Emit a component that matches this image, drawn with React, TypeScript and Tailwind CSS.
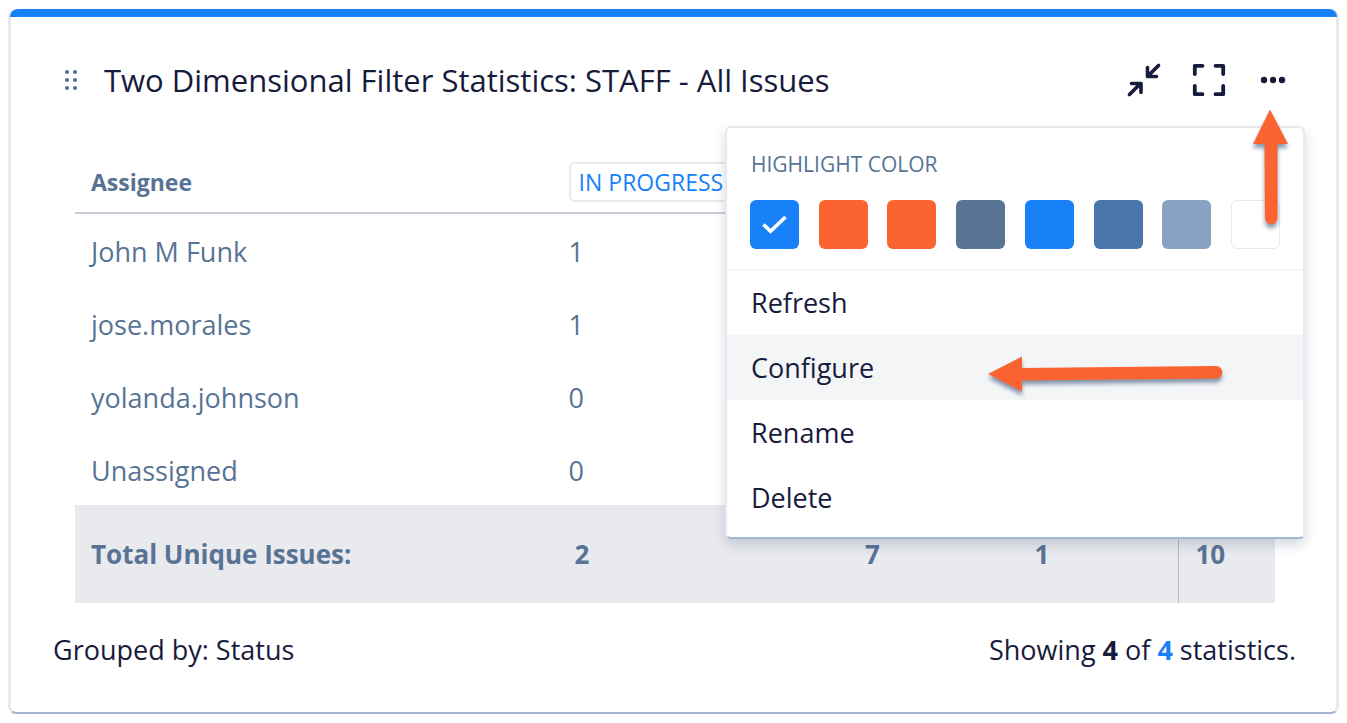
import React from "react";

type Row = { name: string; inProgress: number };

const rows: Row[] = [
  { name: "John M Funk", inProgress: 1 },
  { name: "jose.morales", inProgress: 1 },
  { name: "yolanda.johnson", inProgress: 0 },
  { name: "Unassigned", inProgress: 0 },
];

const swatches = [
  { label: "Blue", color: "bg-[#1881f8]", selected: true },
  { label: "Red", color: "bg-[#fb6430]" },
  { label: "Orange", color: "bg-[#fb6430]" },
  { label: "Slate", color: "bg-[#587394]" },
  { label: "Bright blue", color: "bg-[#1881f8]" },
  { label: "Steel blue", color: "bg-[#4977ad]" },
  { label: "Light steel", color: "bg-[#88a3c1]" },
  { label: "White", color: "border border-[#e8e9ee] bg-white" },
];

const actions = ["Refresh", "Configure", "Rename", "Delete"];

function DragHandle() {
  return (
    <svg width="14" height="22" viewBox="0 0 14 22" fill="#587394" aria-hidden="true">
      {[3, 11, 19].map((y) => (
        <React.Fragment key={y}>
          <circle cx="3" cy={y} r="2.1" />
          <circle cx="11" cy={y} r="2.1" />
        </React.Fragment>
      ))}
    </svg>
  );
}

function MinimizeIcon() {
  return (
    <svg width="34" height="34" viewBox="0 0 34 34" fill="none" stroke="#171b3c" strokeWidth="3.6" strokeLinecap="round" strokeLinejoin="round" aria-hidden="true">
      <path d="M31.500 2.500 21 13M20.500 4.500V13.500h9" />
      <path d="M2.500 31.500 13 21M4.500 20.500h9.500v9" />
    </svg>
  );
}

function MaximizeIcon() {
  return (
    <svg width="34" height="34" viewBox="0 0 34 34" fill="none" stroke="#171b3c" strokeWidth="3.8" strokeLinecap="round" strokeLinejoin="round" aria-hidden="true">
      <path d="M10.500 2.800H2.800V11M23.500 2.800h7.700V11M10.500 31.200H2.800V23M23.500 31.200h7.700V23" />
    </svg>
  );
}

function MoreIcon() {
  return (
    <svg width="26" height="8" viewBox="0 0 26 8" fill="#171b3c" aria-hidden="true">
      <circle cx="4" cy="4" r="3.2" />
      <circle cx="13" cy="4" r="3.2" />
      <circle cx="22" cy="4" r="3.2" />
    </svg>
  );
}

function GadgetMenu() {
  return (
    <div className="absolute right-[31px] top-[117px] w-[580px] rounded-md border-2 border-[#e8e9ee] border-b-[#a3b8d0] bg-white pb-[7px] shadow-[0_6px_12px_rgba(60,80,120,0.22)]">
      <div className="border-b border-[#f0f1f4] px-[23px] py-5">
        <h2 className="pl-px text-[21px] leading-8 text-[#587394]">HIGHLIGHT COLOR</h2>
        <div className="mt-5 flex justify-between">
          {swatches.map((s) => (
            <button
              key={s.label}
              type="button"
              aria-label={s.label}
              className={`flex size-[49px] items-center justify-center rounded-md ${s.color}`}
            >
              {s.selected && (
                <svg width="25" height="19" viewBox="0 0 25 19" fill="none" stroke="#fff" strokeWidth="3.6" aria-hidden="true">
                  <path d="m1.500 9.500 7 6.800L23.500 2" />
                </svg>
              )}
            </button>
          ))}
        </div>
      </div>
      {actions.map((a) => (
        <button
          key={a}
          type="button"
          className={`flex h-[65px] w-full items-center px-6 pt-px text-left text-[27px] leading-9 text-[#171b3c] ${a === "Configure" ? "bg-[#f4f5f7]" : ""}`}
        >
          {a}
        </button>
      ))}
      <svg className="pointer-events-none absolute right-[71px] top-[223px] overflow-visible drop-shadow-[0_4px_2px_rgba(60,85,120,0.6)]" width="244" height="44" viewBox="0 0 244 44" fill="#fb6430" aria-hidden="true">
        <path d="M0 23 34 5.500V17L228 15a6.200 6.200 0 0 1 0 12.500L34 29.500V40.500Z" />
      </svg>
      <svg className="pointer-events-none absolute -top-5 right-[14px] overflow-visible drop-shadow-[0_4px_2px_rgba(60,85,120,0.6)]" width="36" height="118" viewBox="0 0 36 118" fill="#fb6430" aria-hidden="true">
        <path d="M17 1.500 35 36H24.500V110a6.200 6.200 0 0 1-12.500 0L11.500 36H0Z" />
      </svg>
    </div>
  );
}

export default function App() {
  return (
    <main className="min-h-screen bg-white px-2 pb-2 pt-[9px] font-['Open_Sans',sans-serif] text-[#171b3c]">
      <section className="relative rounded-lg border-x-[3px] border-b-2 border-x-[#e8e9ee] border-b-[#a3b8d0]">
        <div className="-mx-px h-2 rounded-t-lg bg-[#1881f8]" />
        <header className="flex items-center justify-between pl-[53px] pr-[50px] pt-9">
          <div className="flex items-center gap-[26px]">
            <DragHandle />
            <h1 className="whitespace-nowrap text-[31px] font-medium leading-[54px]">
              Two Dimensional Filter Statistics: STAFF - All Issues
            </h1>
          </div>
          <div className="flex items-center gap-[34px]">
            <div className="flex items-center gap-[31px]">
              <button type="button" aria-label="Minimize">
                <MinimizeIcon />
              </button>
              <button type="button" aria-label="Maximize">
                <MaximizeIcon />
              </button>
            </div>
            <button type="button" aria-label="More actions">
              <MoreIcon />
            </button>
          </div>
        </header>

        <div className="ml-16 mr-[61px] mt-9">
          <table className="w-full table-fixed border-collapse text-[27px] leading-9 text-[#587394]">
            <colgroup>
              <col className="w-[39.8%]" />
              <col className="w-[24.2%]" />
              <col className="w-[14.3%]" />
              <col className="w-[13.7%]" />
              <col className="w-[8%]" />
            </colgroup>
            <thead>
              <tr className="h-[70px] border-b-2 border-[#c6cbd6] text-left">
                <th className="px-4 pt-2 text-[23px] font-bold">Assignee</th>
                <th className="whitespace-nowrap px-4 pt-2 font-medium">
                  <span className="block w-max rounded-md border-2 border-[#e8e9ee] px-2 text-[23px] leading-9 text-[#1881f8]">
                    IN PROGRESS
                  </span>
                </th>
                <th />
                <th />
                <th />
              </tr>
            </thead>
            <tbody>
              {rows.map((r) => (
                <tr key={r.name} className="h-[73px]">
                  <td className="px-4 pt-1">{r.name}</td>
                  <td className="px-4 pt-1">{r.inProgress}</td>
                  <td />
                  <td />
                  <td />
                </tr>
              ))}
            </tbody>
            <tfoot>
              <tr className="h-[98px] bg-[#e9eaee] text-[26px] font-bold">
                <td className="px-4">Total Unique Issues:</td>
                <td className="px-[22px]">2</td>
                <td className="px-[22px]">7</td>
                <td className="px-5">1</td>
                <td className="border-l border-[#b9b8bb] px-4">10</td>
              </tr>
            </tfoot>
          </table>
        </div>

        <footer className="flex justify-between pb-11 pl-[42px] pr-10 pt-[29px] text-[27px] leading-9">
          <p>Grouped by: Status</p>
          <p>
            Showing <strong className="font-bold">4</strong> of{" "}
            <a href="#statistics" className="font-bold text-[#1881f8]">4</a> statistics.
          </p>
        </footer>

        <GadgetMenu />
      </section>
    </main>
  );
}
